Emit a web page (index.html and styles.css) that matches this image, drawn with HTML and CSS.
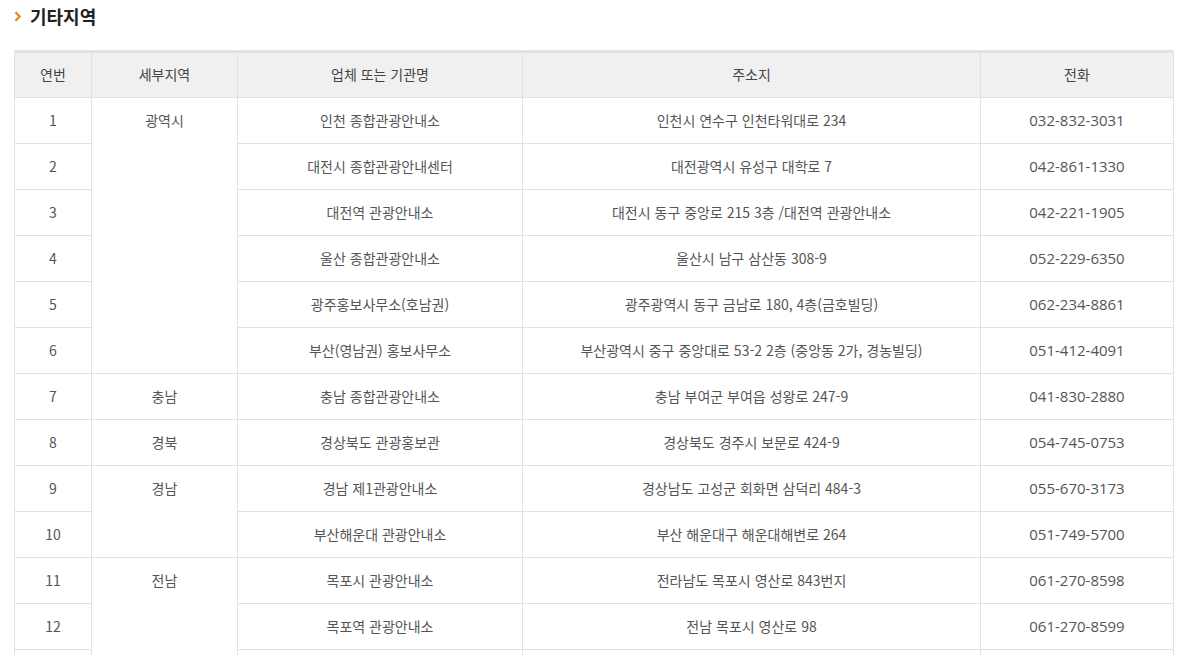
FILE: index.html
```html
<!DOCTYPE html>
<html lang="ko">
<head>
<meta charset="utf-8">
<link rel="stylesheet" href="styles.css">
</head>
<body>
<div class="page">
  <h2 class="title"><span class="chev"><svg width="8" height="11" viewBox="0 0 8 11"><path d="M1.5 1.3 L5.6 5.5 L1.5 9.7" fill="none" stroke="#e8891a" stroke-width="2.3"/></svg></span>기타지역</h2>
  <table class="tbl">
    <colgroup>
      <col class="c1"><col class="c2"><col class="c3"><col class="c4"><col class="c5">
    </colgroup>
    <thead>
      <tr><th>연번</th><th>세부지역</th><th>업체 또는 기관명</th><th>주소지</th><th>전화</th></tr>
    </thead>
    <tbody>
      <tr><td>1</td><td rowspan="6" class="region">광역시</td><td>인천 종합관광안내소</td><td>인천시 연수구 인천타워대로 234</td><td class="tel">032-832-3031</td></tr>
      <tr><td>2</td><td>대전시 종합관광안내센터</td><td>대전광역시 유성구 대학로 7</td><td class="tel">042-861-1330</td></tr>
      <tr><td>3</td><td>대전역 관광안내소</td><td>대전시 동구 중앙로 215 3층 /대전역 관광안내소</td><td class="tel">042-221-1905</td></tr>
      <tr><td>4</td><td>울산 종합관광안내소</td><td>울산시 남구 삼산동 308-9</td><td class="tel">052-229-6350</td></tr>
      <tr><td>5</td><td>광주홍보사무소(호남권)</td><td>광주광역시 동구 금남로 180, 4층(금호빌딩)</td><td class="tel">062-234-8861</td></tr>
      <tr><td>6</td><td>부산(영남권) 홍보사무소</td><td>부산광역시 중구 중앙대로 53-2 2층 (중앙동 2가, 경농빌딩)</td><td class="tel">051-412-4091</td></tr>
      <tr><td>7</td><td class="region">충남</td><td>충남 종합관광안내소</td><td>충남 부여군 부여읍 성왕로 247-9</td><td class="tel">041-830-2880</td></tr>
      <tr><td>8</td><td class="region">경북</td><td>경상북도 관광홍보관</td><td>경상북도 경주시 보문로 424-9</td><td class="tel">054-745-0753</td></tr>
      <tr><td>9</td><td rowspan="2" class="region">경남</td><td>경남 제1관광안내소</td><td>경상남도 고성군 회화면 삼덕리 484-3</td><td class="tel">055-670-3173</td></tr>
      <tr><td>10</td><td>부산해운대 관광안내소</td><td>부산 해운대구 해운대해변로 264</td><td class="tel">051-749-5700</td></tr>
      <tr><td>11</td><td rowspan="3" class="region">전남</td><td>목포시 관광안내소</td><td>전라남도 목포시 영산로 843번지</td><td class="tel">061-270-8598</td></tr>
      <tr><td>12</td><td>목포역 관광안내소</td><td>전남 목포시 영산로 98</td><td class="tel">061-270-8599</td></tr>
      <tr><td></td><td></td><td></td><td></td></tr>
    </tbody>
  </table>
</div>
</body>
</html>
```

FILE: styles.css
```css
html, body {
  margin: 0;
  padding: 0;
  background: #fff;
}
body {
  font-family: "Noto Sans CJK KR", "Noto Sans", sans-serif;
  color: #555;
}
.page {
  padding: 0 0 0 14px;
  width: 1159px;
}
.title {
  margin: 0;
  height: 50px;
  display: flex;
  align-items: flex-start;
  padding-top: 3px;
  box-sizing: border-box;
  font-size: 18px;
  line-height: 26px;
  font-weight: 700;
  color: #222;
}
.chev {
  display: flex;
  align-items: center;
  height: 26px;
  width: 16px;
}
.chev svg {
  display: block;
}
.tbl {
  width: 1159px;
  border-collapse: collapse;
  table-layout: fixed;
  border-top: 3px solid #e2e2e2;
  font-size: 14px;
}
.c1 { width: 77px; }
.c2 { width: 146px; }
.c3 { width: 285px; }
.c4 { width: 458px; }
.c5 { width: 193px; }
.tbl th, .tbl td {
  border: 1px solid #e2e2e2;
  text-align: center;
  padding: 0 0 2px;
  height: 46px;
  line-height: 20px;
  box-sizing: border-box;
}
.tbl th {
  background: #f0f0f0;
  font-weight: 400;
  color: #444;
}
.tbl td.region {
  vertical-align: top;
  padding-top: 12px;
}
.tbl td.tel {
  font-family: "Open Sans", "Noto Sans CJK KR", sans-serif;
  font-size: 15px;
}
```
